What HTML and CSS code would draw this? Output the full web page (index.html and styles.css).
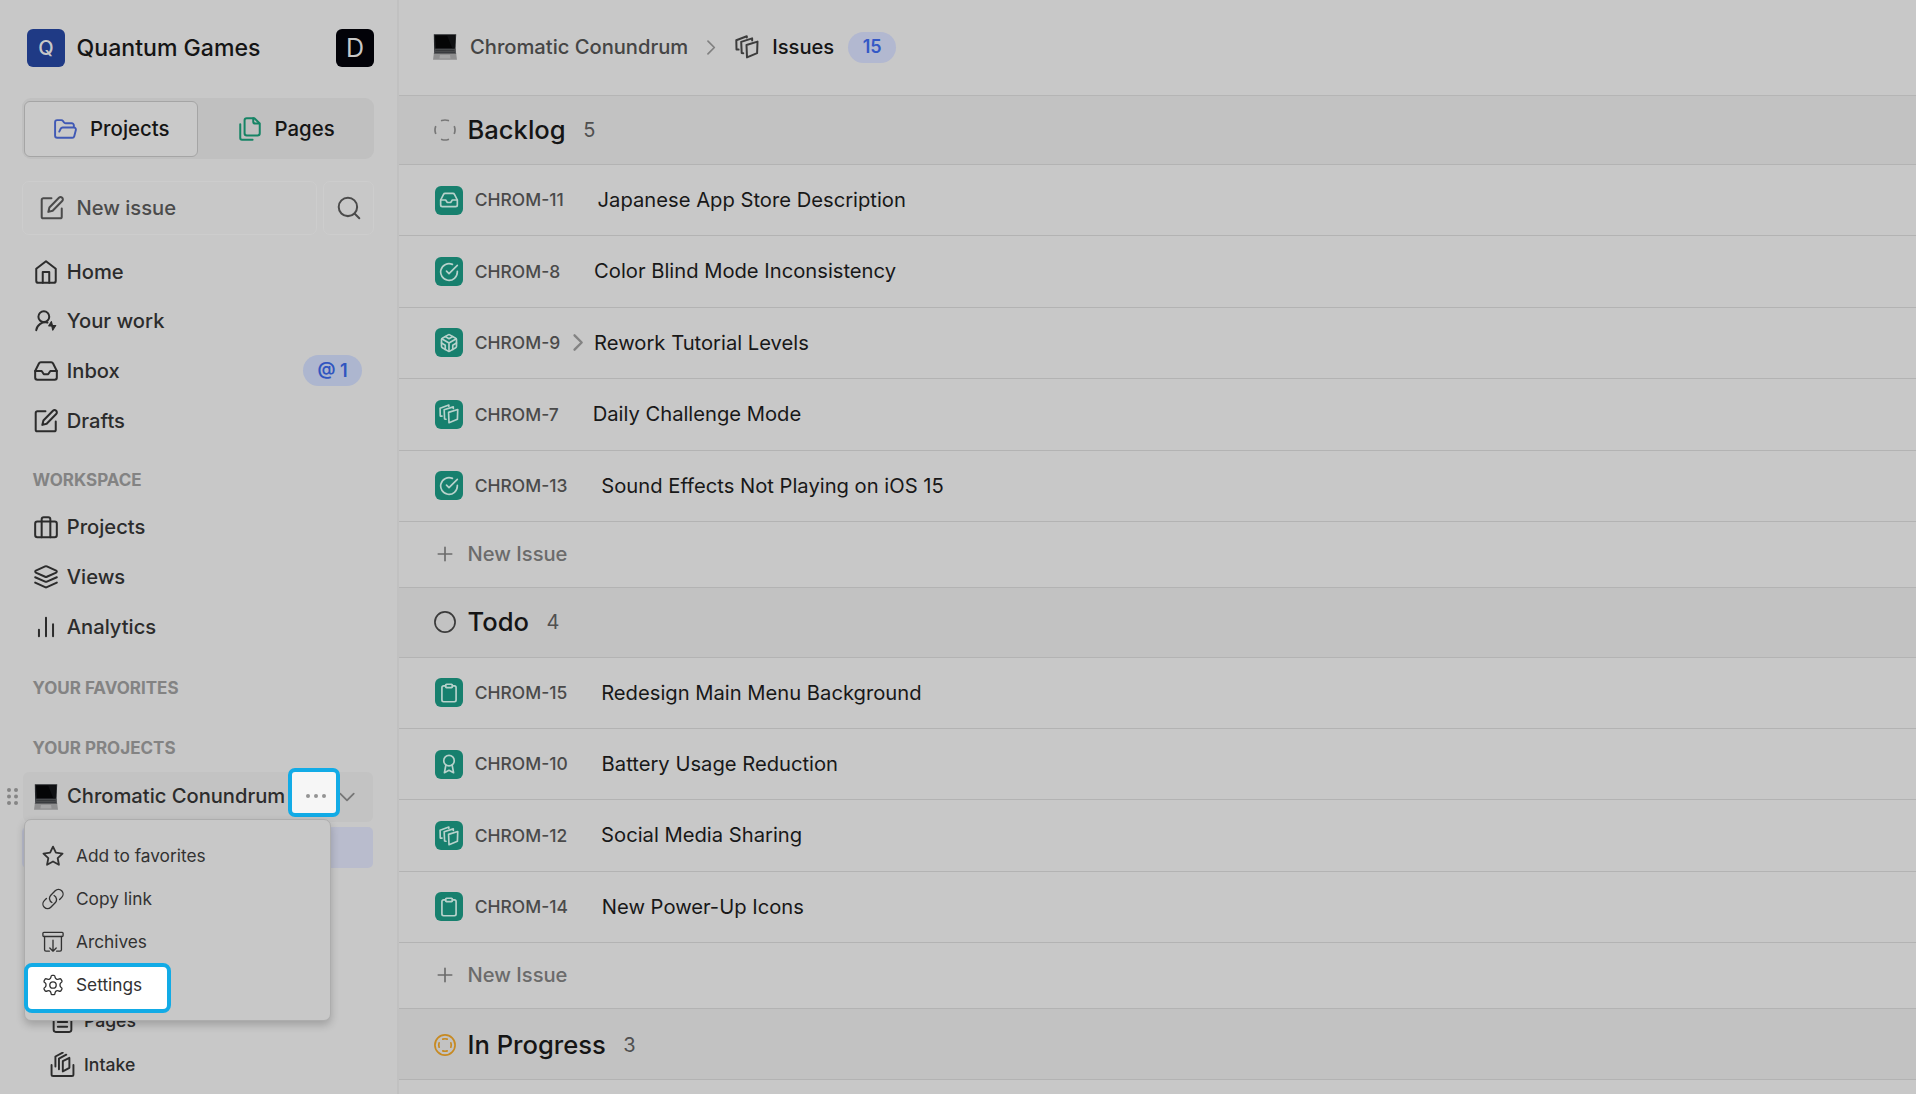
FILE: index.html
```html
<!DOCTYPE html>
<html lang="en">
<head>
<meta charset="utf-8">
<title>Chromatic Conundrum - Issues</title>
<link rel="stylesheet" href="styles.css">
</head>
<body>
<svg class="sprite" aria-hidden="true">
  <symbol id="i-laptop" viewBox="0 0 24 26">
    <path d="M.8.3h22.4l-.8 18H1.2z" fill="#25272a"/>
    <path d="M2 1.2h20l-.6 13.3H2.6z" fill="#050506"/>
    <path d="M14 1.2h8l-.6 13.3h-2z" fill="#101113"/>
    <path d="M1.6 14.8h20.8l.8 5.2H.8z" fill="#4c4e51"/>
    <path d="M2.4 16.4h19.2M2 18.3h20" stroke="#2c2e31" stroke-width=".7"/>
    <path d="M.8 19.8h22.4l.8 5.9H0z" fill="#8f8f90"/>
    <path d="M7 21h10l.6 3.6H6.4z" fill="#a5a5a6"/>
  </symbol>
  <symbol id="i-folder" viewBox="0 0 24 24"><path d="m6 14 1.5-2.9A2 2 0 0 1 9.24 10H20a2 2 0 0 1 1.94 2.5l-1.54 6a2 2 0 0 1-1.95 1.5H4a2 2 0 0 1-2-2V5a2 2 0 0 1 2-2h3.9a2 2 0 0 1 1.69.9l.81 1.2a2 2 0 0 0 1.67.9H18a2 2 0 0 1 2 2v2"/></symbol>
  <symbol id="i-files" viewBox="0 0 24 24"><path d="M20 7h-3a2 2 0 0 1-2-2V2"/><path d="M9 18a2 2 0 0 1-2-2V4a2 2 0 0 1 2-2h7l5 5v9a2 2 0 0 1-2 2Z"/><path d="M3 7.600v12.800A1.600 1.600 0 0 0 4.600 22h9.800"/></symbol>
  <symbol id="i-edit" viewBox="0 0 24 24"><path d="M11.500 3H4a1.500 1.500 0 0 0-1.500 1.500v15.500A1.500 1.500 0 0 0 4 21.500h15.500a1.500 1.500 0 0 0 1.500-1.500v-7.500"/><path d="M18.400 2.600a2.100 2.100 0 0 1 3 3L12.600 14.500 8.600 15.600l1-4Z"/></symbol>
  <symbol id="i-search" viewBox="0 0 24 24"><circle cx="11" cy="11" r="8.500"/><path d="m21.500 21.500-4.400-4.400"/></symbol>
  <symbol id="i-home" viewBox="0 0 24 24"><path d="m3 9 9-7 9 7v11a2 2 0 0 1-2 2H5a2 2 0 0 1-2-2z"/><path d="M9 22V12h6v10"/></symbol>
  <symbol id="i-work" viewBox="0 0 24 24"><circle cx="10" cy="8" r="5"/><path d="M3 20.500a8.500 8.500 0 0 1 10.400-7"/><path d="M17 12.500 14.500 16.500h2.800l.9 4 2.800-4.300h-3z" fill="currentColor" stroke-width="1"/></symbol>
  <symbol id="i-inbox" viewBox="0 0 24 24"><path d="M22 12h-6l-2 3h-4l-2-3H2"/><path d="M5.450 5.110 2 12v6a2 2 0 0 0 2 2h16a2 2 0 0 0 2-2v-6l-3.450-6.890A2 2 0 0 0 16.760 4H7.240a2 2 0 0 0-1.790 1.110z"/></symbol>
  <symbol id="i-case" viewBox="0 0 24 24"><rect x="2" y="6" width="20" height="14.500" rx="2"/><path d="M16 20.500V4a2 2 0 0 0-2-2h-4a2 2 0 0 0-2 2v16.500"/></symbol>
  <symbol id="i-layers" viewBox="0 0 24 24"><path d="M12.800 2.200a2 2 0 0 0-1.600 0L2.600 6.100a1 1 0 0 0 0 1.800l8.600 3.900a2 2 0 0 0 1.600 0l8.600-3.900a1 1 0 0 0 0-1.800Z"/><path d="m2 12.200 9.200 4.100a2 2 0 0 0 1.600 0l9.200-4.100"/><path d="m2 17.200 9.200 4.200a2 2 0 0 0 1.600 0l9.200-4.200"/></symbol>
  <symbol id="i-bars" viewBox="0 0 24 24"><path d="M5.500 20.500v-6M12 20.500v-17M18.500 20.500v-11"/></symbol>
  <symbol id="i-issues" viewBox="0 0 24 24"><path d="m11.500 10 11-3.400-.4 11.600-10.100 4.200z"/><path d="M8.300 18.300 6.700 18 6.200 6.900l10.900-3.500.1 2"/><path d="M3.600 14.600 1.500 14.500 1.300 5.200l10.500-3.900v1.300"/></symbol>
  <symbol id="i-intake" viewBox="0 0 24 24"><path d="M1.500 12.500v9a1.500 1.500 0 0 0 1.500 1.500h18a1.500 1.500 0 0 0 1.500-1.500v-9"/><path d="m12.300 8.700 6.300-3.100v9.600l-6.300 3.400z"/><path d="M8.600 16.500V6.300l7-3.700M5.200 14V4.300l7-3.700"/></symbol>
  <symbol id="i-page" viewBox="0 0 24 24"><rect x="3.500" y="2" width="17" height="20" rx="2"/><path d="M7.500 8h9M7.500 12.500h9M7.500 17h9"/></symbol>
  <symbol id="i-check" viewBox="0 0 24 24"><path d="M22 11.080V12a10 10 0 1 1-5.930-9.140"/><path d="M22 4 12 14.010l-3-3"/></symbol>
  <symbol id="i-cube" viewBox="0 0 24 24"><path d="M21 16V8a2 2 0 0 0-1-1.730l-7-4a2 2 0 0 0-2 0l-7 4A2 2 0 0 0 3 8v8a2 2 0 0 0 1 1.730l7 4a2 2 0 0 0 2 0l7-4A2 2 0 0 0 21 16z"/><path d="m7.500 4.210 4.500 2.600 4.500-2.600M7.500 19.790V14.600L3 12M21 12l-4.500 2.600v5.190M3.270 6.960 12 12.010l8.730-5.050M12 22.080V12"/></symbol>
  <symbol id="i-clip" viewBox="0 0 24 24"><rect x="8" y="1.500" width="8" height="4" rx="1"/><path d="M16 3.500h2.500a2 2 0 0 1 2 2V20.500a2 2 0 0 1-2 2h-13a2 2 0 0 1-2-2V5.500a2 2 0 0 1 2-2H8"/></symbol>
  <symbol id="i-award" viewBox="0 0 24 24"><circle cx="12" cy="8" r="6.300"/><path d="m8.200 13.500-1.700 9 5.500-3 5.500 3-1.700-9"/></symbol>
  <symbol id="i-plus" viewBox="0 0 24 24"><path d="M3 12h18M12 3v18"/></symbol>
  <symbol id="i-right" viewBox="0 0 24 24"><path d="m7 3 9 9-9 9"/></symbol>
  <symbol id="i-down" viewBox="0 0 24 24"><path d="m3 7.500 9 9 9-9"/></symbol>
  <symbol id="i-star" viewBox="0 0 24 24"><path d="m12 1.800 3.150 6.600 7.250.95-5.300 5 1.350 7.200L12 18.050l-6.450 3.500 1.350-7.200-5.300-5 7.250-.95z"/></symbol>
  <symbol id="i-link" viewBox="0 0 24 24"><path d="M13.200 8.200a5 5 0 0 1 1.200 7.900l-4.800 4.800a5 5 0 0 1-7.100-7.100l2.300-2.300"/><path d="M10.800 15.800a5 5 0 0 1-1.200-7.900l4.800-4.800a5 5 0 0 1 7.100 7.100l-2.300 2.300"/></symbol>
  <symbol id="i-archive" viewBox="0 0 24 24"><rect x="1" y="1.500" width="22" height="4.500" rx="1"/><path d="M2.800 6v14.500a1.500 1.500 0 0 0 1.500 1.500H8M21.200 6v14.500a1.500 1.500 0 0 1-1.500 1.500H16M12 10v12M8.500 18.500 12 22l3.500-3.500"/></symbol>
  <symbol id="i-gear" viewBox="0 0 24 24"><path d="M9.600 3.900c.1-.9.500-2.400 1.300-2.400h2.200c.8 0 1.200 1.500 1.300 2.400.2.900.8 1.300 1.400 1.600.6.300 1.300.5 2.100.2.900-.4 2.300-.8 2.700-.1l1.200 2c.4.700-.7 1.800-1.400 2.300-.7.600-.8 1.300-.8 2.100s.1 1.500.8 2.100c.7.500 1.800 1.600 1.400 2.300l-1.200 2c-.4.700-1.800.3-2.700-.1-.8-.3-1.500-.1-2.100.2-.6.300-1.200.7-1.400 1.600-.1.900-.5 2.400-1.300 2.400h-2.200c-.8 0-1.200-1.500-1.300-2.400-.2-.9-.8-1.300-1.400-1.600-.6-.3-1.300-.5-2.100-.2-.9.400-2.300.8-2.700.1l-1.200-2c-.4-.7.700-1.800 1.400-2.300.7-.6.800-1.300.8-2.100s-.1-1.500-.8-2.100c-.7-.5-1.800-1.600-1.400-2.300l1.200-2c.4-.7 1.800-.3 2.700.1.800.3 1.500.1 2.100-.2.600-.3 1.200-.7 1.400-1.600z"/><circle cx="12" cy="12" r="3.500"/></symbol>
  <symbol id="i-backlog" viewBox="0 0 24 24"><path d="M8.400 1.700a11 11 0 0 1 7.200 0M22.300 8.400a11 11 0 0 1 0 7.200M15.600 22.300a11 11 0 0 1-7.200 0M1.700 15.600a11 11 0 0 1 0-7.200"/></symbol>
  <symbol id="i-todo" viewBox="0 0 24 24"><circle cx="12" cy="12" r="11"/></symbol>
  <symbol id="i-progress" viewBox="0 0 24 24"><circle cx="12" cy="12" r="11"/><path d="M9.600 5.600a7 7 0 0 1 4.800 0M18.400 9.600a7 7 0 0 1 0 4.800M14.400 18.400a7 7 0 0 1-4.800 0M5.600 14.400a7 7 0 0 1 0-4.800"/></symbol>
</svg>

<div class="app">
  <aside class="sidebar">
    <div class="workspace">
      <span class="logo">Q</span>
      <span class="workspace-name">Quantum Games</span>
      <span class="avatar">D</span>
    </div>
    <div class="tabs">
      <div class="tab tab-active"><svg class="icon folder"><use href="#i-folder"/></svg>Projects</div>
      <div class="tab tab-pages"><svg class="icon files"><use href="#i-files"/></svg>Pages</div>
    </div>
    <div class="actions">
      <div class="new-issue"><svg class="icon"><use href="#i-edit"/></svg>New issue</div>
      <div class="search"><svg class="icon"><use href="#i-search"/></svg></div>
    </div>
    <nav class="nav nav-main">
      <a class="nav-item"><svg class="icon"><use href="#i-home"/></svg>Home</a>
      <a class="nav-item"><svg class="icon"><use href="#i-work"/></svg>Your work</a>
      <a class="nav-item"><svg class="icon"><use href="#i-inbox"/></svg>Inbox<span class="mention">@ 1</span></a>
      <a class="nav-item"><svg class="icon"><use href="#i-edit"/></svg>Drafts</a>
    </nav>
    <h2 class="section">WORKSPACE</h2>
    <nav class="nav">
      <a class="nav-item"><svg class="icon"><use href="#i-case"/></svg>Projects</a>
      <a class="nav-item"><svg class="icon"><use href="#i-layers"/></svg>Views</a>
      <a class="nav-item"><svg class="icon"><use href="#i-bars"/></svg>Analytics</a>
    </nav>
    <h2 class="section section-fav">YOUR FAVORITES</h2>
    <h2 class="section section-projects">YOUR PROJECTS</h2>
    <div class="project">
      <svg class="grip" viewBox="0 0 12 18"><circle cx="2" cy="2" r="2"/><circle cx="9" cy="2" r="2"/><circle cx="2" cy="8.500" r="2"/><circle cx="9" cy="8.500" r="2"/><circle cx="2" cy="15" r="2"/><circle cx="9" cy="15" r="2"/></svg>
      <div class="project-row">
        <svg class="laptop"><use href="#i-laptop"/></svg>
        <span>Chromatic Conundrum</span>
        <svg class="icon chevron-down"><use href="#i-down"/></svg>
        <button class="more"><svg viewBox="0 0 20 4"><circle cx="2" cy="2" r="2"/><circle cx="10" cy="2" r="2"/><circle cx="18" cy="2" r="2"/></svg></button>
      </div>
    </div>
    <div class="subnav">
      <div class="sub-active"></div>
      <a class="sub-item"><svg class="icon"><use href="#i-page"/></svg>Pages</a>
      <a class="sub-item"><svg class="icon"><use href="#i-intake"/></svg>Intake</a>
      <div class="menu">
        <div class="menu-item"><svg class="icon bold"><use href="#i-star"/></svg>Add to favorites</div>
        <div class="menu-item"><svg class="icon"><use href="#i-link"/></svg>Copy link</div>
        <div class="menu-item"><svg class="icon"><use href="#i-archive"/></svg>Archives</div>
        <div class="menu-item settings"><svg class="icon"><use href="#i-gear"/></svg>Settings</div>
      </div>
    </div>
  </aside>

  <main class="main">
    <header class="topbar">
      <svg class="laptop"><use href="#i-laptop"/></svg>
      <span class="crumb">Chromatic Conundrum</span>
      <svg class="icon crumb-sep"><use href="#i-right"/></svg>
      <svg class="icon crumb-icon"><use href="#i-issues"/></svg>
      <span class="crumb-current">Issues</span>
      <span class="total">15</span>
    </header>

    <div class="group group-backlog"><svg class="icon"><use href="#i-backlog"/></svg>Backlog<span class="count">5</span></div>
    <div class="issue"><span class="type"><svg class="icon"><use href="#i-inbox"/></svg></span><span class="id">CHROM-11</span><span class="gap"></span>Japanese App Store Description</div>
    <div class="issue"><span class="type"><svg class="icon"><use href="#i-check"/></svg></span><span class="id">CHROM-8</span><span class="gap"></span>Color Blind Mode Inconsistency</div>
    <div class="issue"><span class="type"><svg class="icon"><use href="#i-cube"/></svg></span><span class="id">CHROM-9</span><span class="gap"><svg class="icon"><use href="#i-right"/></svg></span>Rework Tutorial Levels</div>
    <div class="issue"><span class="type"><svg class="icon"><use href="#i-issues"/></svg></span><span class="id">CHROM-7</span><span class="gap"></span>Daily Challenge Mode</div>
    <div class="issue"><span class="type"><svg class="icon"><use href="#i-check"/></svg></span><span class="id">CHROM-13</span><span class="gap"></span>Sound Effects Not Playing on iOS 15</div>
    <div class="new-row"><svg class="icon"><use href="#i-plus"/></svg>New Issue</div>

    <div class="group"><svg class="icon"><use href="#i-todo"/></svg>Todo<span class="count">4</span></div>
    <div class="issue"><span class="type"><svg class="icon"><use href="#i-clip"/></svg></span><span class="id">CHROM-15</span><span class="gap"></span>Redesign Main Menu Background</div>
    <div class="issue"><span class="type"><svg class="icon"><use href="#i-award"/></svg></span><span class="id">CHROM-10</span><span class="gap"></span>Battery Usage Reduction</div>
    <div class="issue"><span class="type"><svg class="icon"><use href="#i-issues"/></svg></span><span class="id">CHROM-12</span><span class="gap"></span>Social Media Sharing</div>
    <div class="issue"><span class="type"><svg class="icon"><use href="#i-clip"/></svg></span><span class="id">CHROM-14</span><span class="gap"></span>New Power-Up Icons</div>
    <div class="new-row"><svg class="icon"><use href="#i-plus"/></svg>New Issue</div>

    <div class="group group-progress"><svg class="icon"><use href="#i-progress"/></svg>In Progress<span class="count">3</span></div>
  </main>
</div>
</body>
</html>
```
FILE: styles.css
```css
* { box-sizing: border-box; }

body {
  margin: 0;
  height: 1094px;
  overflow: hidden;
  background: #c8c8c8;
  color: #2c2c2c;
  font-family: Inter, sans-serif;
  font-size: 20.15px;
  font-weight: 500;
  line-height: 1;
}

.sprite { display: none; }

.icon {
  flex: none;
  width: 26px;
  height: 26px;
  fill: none;
  stroke: currentColor;
  stroke-width: 1.85;
  stroke-linecap: round;
  stroke-linejoin: round;
  overflow: visible;
}

.laptop { flex: none; width: 24px; height: 26px; }

.app { display: flex; height: 100%; }

/* Sidebar */
.sidebar {
  flex: none;
  width: 399px;
  display: flex;
  flex-direction: column;
  border-right: 2px solid #c1c1c1;
}

.workspace {
  display: flex;
  align-items: center;
  height: 38px;
  margin: 29px 23px 0 27px;
  font-size: 23.1px;
  color: #151515;
}

.logo, .avatar {
  width: 38px;
  height: 38px;
  border-radius: 6px;
  display: flex;
  align-items: center;
  justify-content: center;
  color: #c8c8c8;
}

.logo { background: #1f3a85; font-size: 20px; }
.avatar { background: #020208; font-size: 25px; font-weight: 400; margin-left: auto; }
.workspace-name { margin-left: 11.5px; padding-top: 2px; }

.tabs {
  display: flex;
  height: 61px;
  margin: 31px 23px 0 22px;
  padding: 3px 2px 2px;
  background: #c0c0c0;
  border-radius: 9px;
  font-size: 20.4px;
  color: #151515;
}

.tab {
  display: flex;
  align-items: center;
  gap: 12px;
  height: 56px;
}

.tab-active {
  width: 174px;
  padding-left: 28px;
  background: #c9c9c9;
  border: 1px solid #a5a5a5;
  border-radius: 6px;
}

.tab-pages { padding-left: 39px; gap: 11.5px; }
.folder { width: 25px; height: 25px; color: #4059b5; }
.files { color: #168465; }

.actions { display: flex; gap: 6px; height: 54px; margin: 22px 23px 0 22px; color: #4b4b4b; }

.new-issue, .search {
  display: flex;
  align-items: center;
  border: 1px solid #cdcdcd;
  border-radius: 7px;
}

.new-issue { width: 295px; padding-left: 16px; gap: 11.5px; }
.search { flex: 1; justify-content: center; }

.nav-main { margin-top: 12px; }

.nav-item {
  display: flex;
  align-items: center;
  gap: 7.8px;
  height: 49.6px;
  padding: 0 35px 0 33px;
}

.mention {
  margin-left: auto;
  width: 59px;
  height: 31px;
  border-radius: 16px;
  background: #adb6cf;
  color: #3055c0;
  font-size: 18px;
  font-weight: 600;
  display: flex;
  align-items: center;
  justify-content: center;
}

.section {
  display: flex;
  align-items: center;
  height: 57.4px;
  margin: 0;
  padding: 13px 0 0 32.5px;
  font-size: 17px;
  font-weight: 700;
  color: #838383;
}

.section-fav { height: 60px; }
.section-projects { height: 60px; padding-top: 14px; }

.project { display: flex; align-items: center; height: 50px; }
.grip { flex: none; width: 12px; height: 18px; margin: 0 4px 0 7px; fill: #858585; }

.project-row {
  position: relative;
  display: flex;
  align-items: center;
  gap: 9.5px;
  width: 350px;
  height: 50px;
  padding-left: 10.5px;
  border-radius: 6px;
  background: #c3c3c3;
}

.chevron-down { position: absolute; left: 315px; top: 16px; width: 18px; height: 18px; color: #767676; stroke-width: 2.4; }

/* Highlighted trigger, sits above the row */
.more {
  position: absolute;
  left: 265px;
  top: -4px;
  width: 52px;
  height: 49px;
  padding: 8px 0 0 3px;
  border: 4px solid #12abe6;
  border-radius: 7px;
  background: #f6f6f6;
  display: flex;
  align-items: center;
  justify-content: center;
}

.more svg { width: 20px; height: 4px; fill: #939393; }

.subnav {
  position: relative;
  display: flex;
  flex-direction: column;
  padding: 5px 24px 0 22px;
  font-size: 17.6px;
}

.sub-active { height: 41px; margin-bottom: 132px; border-radius: 5px; background: #b9bccd; }

.sub-item { display: flex; align-items: center; gap: 9px; height: 43.4px; padding-left: 28px; }
.sub-item .icon { width: 25px; height: 25px; }

/* Context menu */
.menu {
  position: absolute;
  left: 24px;
  top: -2.5px;
  width: 307px;
  height: 202px;
  padding-top: 14px;
  border: 1px solid #adadad;
  border-radius: 7px;
  background: #c8c8c8;
  box-shadow: 0 4px 9px rgba(0, 0, 0, .2);
  font-size: 17.3px;
  font-weight: 400;
  color: #323232;
}

.menu-item { display: flex; align-items: center; gap: 12px; height: 43px; padding-left: 17px; }
.menu-item .icon { width: 22px; height: 22px; stroke-width: 1.45; }
.menu-item .bold { stroke-width: 2; }

.settings {
  width: 147px;
  height: 50px;
  margin: 0 0 0 -1px;
  padding: 0 0 6px 14px;
  border: 4px solid #12abe6;
  border-radius: 8px;
  background: #fff;
}

/* Issue list */
.main { flex: 1; display: flex; flex-direction: column; min-width: 0; }

.topbar {
  flex: none;
  display: flex;
  align-items: center;
  height: 96px;
  padding: 0 0 1px 34px;
  border-bottom: 1px solid #b5b5b5;
}

.crumb { margin-left: 13px; color: #454545; }
.crumb-sep { width: 17px; height: 17px; margin-left: 15px; color: #808080; stroke-width: 2.4; }
.crumb-icon { width: 24px; height: 24px; margin-left: 15px; color: #3c3c3c; stroke-width: 2; }
.crumb-current { margin-left: 13px; color: #151515; }

.total {
  width: 48px;
  height: 31px;
  margin-left: 14px;
  border-radius: 16px;
  background: #b2b8d0;
  color: #3458c6;
  font-size: 18px;
  font-weight: 600;
  display: flex;
  align-items: center;
  justify-content: center;
}

.group, .issue, .new-row {
  flex: none;
  display: flex;
  align-items: center;
  border-bottom: 1px solid #b3b3b3;
}

.group {
  height: 70px;
  padding-left: 35px;
  background: #c2c2c2;
  font-size: 25.6px;
  color: #151515;
}

.group .icon { width: 22px; height: 22px; margin-right: 11.5px; color: #3b3b3b; }
.group-backlog { height: 69px; }
.group-backlog .icon { color: #777; }
.group-progress { height: 71px; padding-top: 2px; }
.group-progress .icon { color: #c78a22; }
.count { margin-left: 17.5px; font-size: 20px; font-weight: 400; color: #505050; }

.issue { height: 71.4px; padding-left: 36px; font-size: 20.2px; font-weight: 400; color: #181818; }

.type {
  width: 28px;
  height: 29px;
  border-radius: 6px;
  background: #17806e;
  color: #b8d2cc;
  display: flex;
  align-items: center;
  justify-content: center;
}

.type .icon { width: 20px; height: 20px; stroke-width: 2; }
.id { margin-left: 11.8px; font-size: 17.45px; font-weight: 500; color: #4a4a4a; }
.gap { width: 33.9px; display: flex; align-items: center; padding-left: 9px; }
.gap .icon { width: 19px; height: 19px; color: #838383; stroke-width: 3; }

.new-row { height: 65.6px; padding-left: 37px; color: #6b6b6b; }
.new-row .icon { width: 18px; height: 18px; margin-right: 13.5px; stroke-width: 2.2; }
```
